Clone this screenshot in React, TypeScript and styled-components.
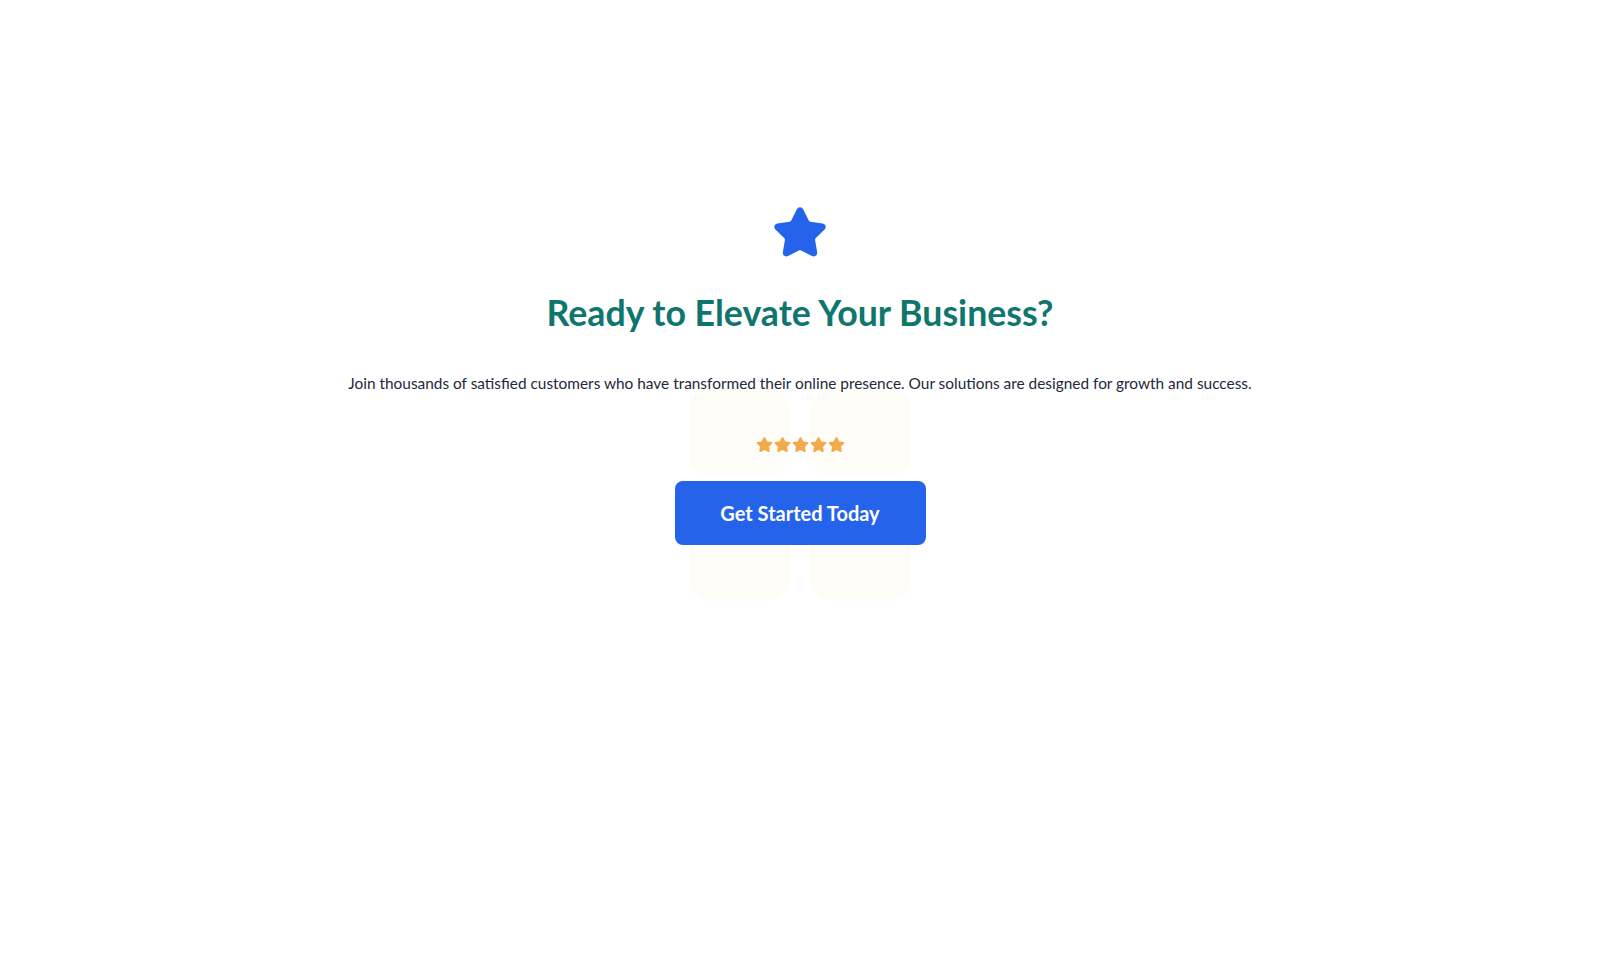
import React from 'react';
import styled, { createGlobalStyle } from 'styled-components';
import { Star } from 'lucide-react';
import { FaStar } from 'react-icons/fa';

const GlobalStyle = createGlobalStyle`
  html, body {
    margin: 0;
    padding: 0;
    background: #ffffff;
  }
  body {
    font-family: Lato, "Open Sans", "Liberation Sans", sans-serif;
    color: #1e293b;
  }
`;

const Page = styled.section`
  position: relative;
  min-height: 978px;
  display: flex;
  justify-content: center;
  padding-top: 205px;
  box-sizing: border-box;
`;

// faint tiles sitting behind the rating and the button
const Decor = styled.div`
  position: absolute;
  top: 388px;
  left: 50%;
  transform: translateX(-50%);
  display: grid;
  grid-template-columns: 100px 100px;
  grid-template-rows: 88px 100px;
  column-gap: 22px;
  row-gap: 25px;
  z-index: 0;
  pointer-events: none;
`;

const DecorTile = styled.div`
  background: #fdfcf7;
  border-radius: 22px;
`;

const Content = styled.div`
  position: relative;
  z-index: 1;
  display: flex;
  flex-direction: column;
  align-items: center;
  text-align: center;
`;

const Heading = styled.h2`
  margin: 30px 0 0;
  font-size: 35.7px;
  line-height: 44px;
  font-weight: 700;
  color: #0f766e;
`;

const Lead = styled.p`
  margin: 36px 0 0;
  font-size: 15.4px;
  line-height: 24px;
  color: #1e293b;
`;

const Rating = styled.div`
  display: flex;
  gap: 1px;
  margin-top: 41px;
  color: #f2ab4c;
`;

const CtaButton = styled.button`
  margin-top: 28px;
  width: 251px;
  height: 64px;
  border: none;
  border-radius: 8px;
  background: #2563eb;
  color: #ffffff;
  font-family: inherit;
  font-size: 20px;
  font-weight: 700;
  cursor: pointer;
`;

const App = () => {
  return (
    <>
      <GlobalStyle />
      <Page>
        <Decor>
          <DecorTile />
          <DecorTile />
          <DecorTile />
          <DecorTile />
        </Decor>
        <Content>
          <Star size={56} color="#2563eb" fill="#2563eb" strokeWidth={2} />
          <Heading>Ready to Elevate Your Business?</Heading>
          <Lead>
            Join thousands of satisfied customers who have transformed their online presence. Our solutions are designed for growth and success.
          </Lead>
          <Rating>
            {[0, 1, 2, 3, 4].map((i) => (
              <FaStar key={i} size={17} />
            ))}
          </Rating>
          <CtaButton>Get Started Today</CtaButton>
        </Content>
      </Page>
    </>
  );
};

export default App;
